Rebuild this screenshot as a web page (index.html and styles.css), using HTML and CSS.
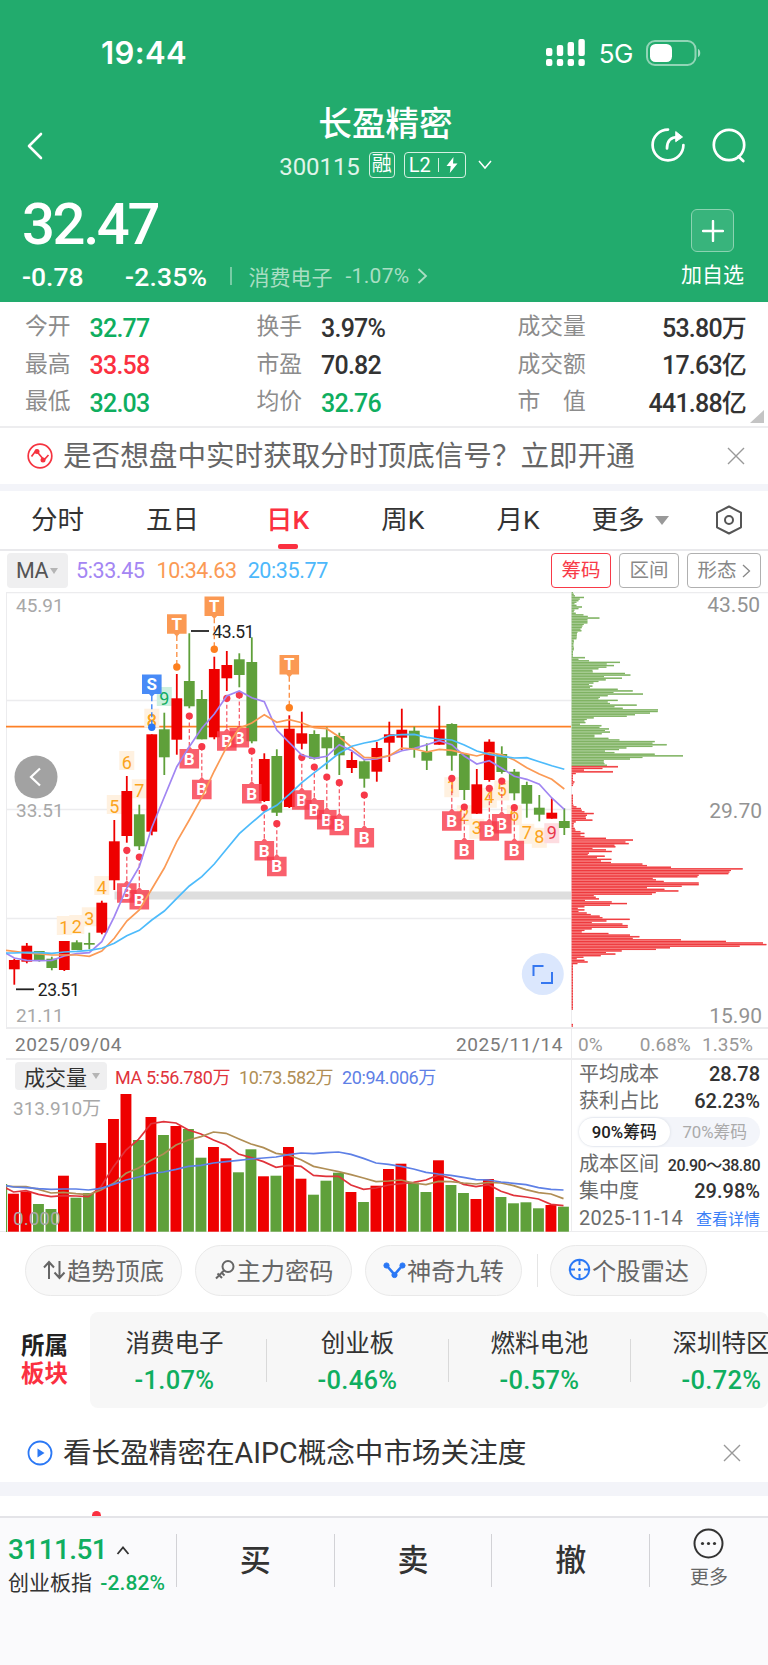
FILE: index.html
```html
<!DOCTYPE html>
<html lang="zh-CN">
<head>
  <meta charset="UTF-8">
  <title>长盈精密 300115</title>
  <meta name="viewport" content="width=device-width,initial-scale=1">
  <link rel="stylesheet" href="styles.css">
</head>
<body>
  <header class="top">
    <div class="status-bar">
      <span class="time">19:44</span>
      <div class="status-icons">
        <svg width="40" height="28" viewBox="0 0 40 28" fill="#fff">
          <rect x="0" y="9" width="6.4" height="8" rx="2"/><rect x="10.8" y="6" width="6.4" height="11" rx="2"/><rect x="21.6" y="3" width="6.4" height="14" rx="2"/><rect x="32.4" y="0" width="6.4" height="17" rx="2"/>
          <rect x="0" y="20" width="6.4" height="7" rx="2"/><rect x="10.8" y="20" width="6.4" height="7" rx="2"/><rect x="21.6" y="20" width="6.4" height="7" rx="2"/><rect x="32.4" y="20" width="6.4" height="7" rx="2"/>
        </svg>
        <span class="net">5G</span>
        <svg width="56" height="26" viewBox="0 0 56 26">
          <rect x="1" y="1" width="48.5" height="24" rx="8" fill="none" stroke="#fff" stroke-opacity=".5" stroke-width="2"/>
          <rect x="4" y="4" width="22" height="18" rx="5.5" fill="#fff"/>
          <path d="M52 9c3 1 3 7 0 8z" fill="#fff" fill-opacity=".6"/>
        </svg>
      </div>
    </div>
    <div class="nav">
      <svg class="back" width="16" height="28" viewBox="0 0 16 28"><path d="M14 2L2 14l12 12" fill="none" stroke="#fff" stroke-width="2.6" stroke-linecap="round" stroke-linejoin="round"/></svg>
      <div class="nav-title">
        <h1>长盈精密</h1>
        <div class="code-row">
          <span class="code">300115</span>
          <span class="tag">融</span>
          <span class="tag tag-l2">L2<i></i><svg width="12" height="16" viewBox="0 0 12 16"><path d="M7.5 0L0.5 9h4.2L3.8 16 11.5 6.4H7z" fill="#fff"/></svg></span>
          <svg class="down" width="14" height="10" viewBox="0 0 14 10"><path d="M1 1l6 7 6-7" fill="none" stroke="#fff" stroke-width="1.5"/></svg>
        </div>
      </div>
      <div class="nav-icons">
        <svg width="36" height="36" viewBox="0 0 36 36" fill="none" stroke="#fff" stroke-width="2.7" stroke-linecap="round" stroke-linejoin="round">
          <path d="M18 2.6A15.4 15.4 0 1 0 33.4 18"/>
          <path d="M17 21.5c0-7 3.5-11.5 11-11.5"/>
          <path d="M26 4.8l6.5 5.2-6.5 4.5z" fill="#fff" stroke-width="1"/>
        </svg>
        <svg width="36" height="36" viewBox="0 0 36 36" fill="none" stroke="#fff" stroke-width="2.7" stroke-linecap="round">
          <circle cx="18" cy="18" r="15.2"/><path d="M27.5 29.5l4.8 4.5"/>
        </svg>
      </div>
    </div>
    <div class="quote">
      <div>
        <div class="price">32.47</div>
        <div class="change-row">
          <span class="chg">-0.78</span><span class="pct">-2.35%</span><i class="bar"></i>
          <span class="industry">消费电子</span><span class="industry-pct">-1.07%</span>
          <svg width="11" height="16" viewBox="0 0 11 16"><path d="M1.5 1l7.5 7-7.5 7" fill="none" stroke="#a9dec3" stroke-width="1.8"/></svg>
        </div>
      </div>
      <div class="add">
        <span class="add-btn"><svg width="22" height="22" viewBox="0 0 22 22"><path d="M11 1v20M1 11h20" stroke="#fff" stroke-width="2.4" stroke-linecap="round"/></svg></span>
        <span>加自选</span>
      </div>
    </div>
  </header>

  <section class="stats">
    <dl><dt>今开</dt><dd class="green">32.77</dd></dl>
    <dl><dt>换手</dt><dd>3.97%</dd></dl>
    <dl class="wide"><dt>成交量</dt><dd>53.80万</dd></dl>
    <dl><dt>最高</dt><dd class="red">33.58</dd></dl>
    <dl><dt>市盈</dt><dd>70.82</dd></dl>
    <dl class="wide"><dt>成交额</dt><dd>17.63亿</dd></dl>
    <dl><dt>最低</dt><dd class="green">32.03</dd></dl>
    <dl><dt>均价</dt><dd class="green">32.76</dd></dl>
    <dl class="wide"><dt>市　值</dt><dd>441.88亿</dd></dl>
    <svg class="corner" width="14" height="13" viewBox="0 0 14 13"><path d="M14 0v13H0z" fill="#c4c4c4"/></svg>
  </section>

  <div class="notice">
    <svg width="26" height="26" viewBox="0 0 26 26"><circle cx="13" cy="13" r="11.8" fill="none" stroke="#f5333f" stroke-width="1.7"/><path d="M4.5 13.5l4.5-6 8 9.5 4.5-5" fill="none" stroke="#f5333f" stroke-width="1.7"/><circle cx="10" cy="8.5" r="2.5" fill="#f5333f"/><circle cx="16" cy="17" r="2.5" fill="#f5333f"/></svg>
    <span>是否想盘中实时获取分时顶底信号？立即开通</span>
    <svg class="close" width="18" height="18" viewBox="0 0 18 18"><path d="M1 1l16 16M17 1L1 17" stroke="#999" stroke-width="1.4"/></svg>
  </div>

  <nav class="tabs">
    <span>分时</span><span>五日</span><span class="active">日K</span><span>周K</span><span>月K</span>
    <span class="more">更多<i class="tri"></i></span>
    <svg width="28" height="30" viewBox="0 0 28 30" fill="none" stroke="#555" stroke-width="2" stroke-linejoin="round"><path d="M14 1.5l12 6.2v14.6l-12 6.2-12-6.2V7.7z"/><circle cx="14" cy="15" r="4"/></svg>
  </nav>

  <div class="ma-row">
    <span class="select">MA<i class="tri small"></i></span>
    <span class="ma5">5:33.45</span><span class="ma10">10:34.63</span><span class="ma20">20:35.77</span>
    <div class="modes">
      <span class="mode on">筹码</span><span class="mode">区间</span>
      <span class="mode last">形态<svg width="9" height="14" viewBox="0 0 9 14"><path d="M1 1l6.5 6L1 13" fill="none" stroke="#888" stroke-width="1.3"/></svg></span>
    </div>
  </div>

  <section class="chart">
    <div class="chart-left">
      <svg id="kline" width="565" height="435" viewBox="6 592 565 435"></svg>
      <div class="dates"><span>2025/09/04</span><span>2025/11/14</span></div>
      <div class="volume">
        <div class="vol-head">
          <span class="select">成交量<i class="tri small"></i></span>
          <span class="v5">MA 5:56.780万</span><span class="v10">10:73.582万</span><span class="v20">20:94.006万</span>
        </div>
        <svg id="volume" width="565" height="140" viewBox="6 1092 565 140"></svg>
      </div>
    </div>
    <div class="chart-right">
      <svg id="chips" width="197" height="435" viewBox="571 592 197 435"></svg>
      <div class="scale"><span>0%</span><span>0.68%</span><span>1.35%</span></div>
      <div class="cost">
        <p><span>平均成本</span><b>28.78</b></p>
        <p><span>获利占比</span><b>62.23%</b></p>
        <div class="toggle"><span class="on">90%筹码</span><span>70%筹码</span></div>
        <p><span>成本区间</span><b class="range">20.90～38.80</b></p>
        <p><span>集中度</span><b>29.98%</b></p>
        <p><span class="day">2025-11-14</span><a>查看详情</a></p>
      </div>
    </div>
  </section>

  <div class="tools">
    <span class="tool"><svg width="23" height="22" viewBox="0 0 23 22" fill="none" stroke="#666" stroke-width="2"><path d="M6 20V3M1 8.5L6 3l5 5.5M16.5 2v17M11.5 13.5l5 5.5 5-5.5"/></svg>趋势顶底</span>
    <span class="tool"><svg width="22" height="22" viewBox="0 0 22 22" fill="none" stroke="#666" stroke-width="2"><circle cx="14" cy="7.5" r="5.5"/><path d="M10 11.5L2 19.5M3.5 14.5l4.5 4.5M7 13l3.5 3.5"/></svg>主力密码</span>
    <span class="tool"><svg width="23" height="18" viewBox="0 0 23 18" fill="#2b78f5" stroke="#2b78f5"><path d="M4 5l7.5 8.5L19 5" fill="none" stroke-width="2.6"/><circle cx="3.5" cy="4.5" r="2.6"/><circle cx="11.5" cy="14" r="2.6"/><circle cx="19.5" cy="4.5" r="2.6"/></svg>神奇九转</span>
    <i class="split"></i>
    <span class="tool"><svg width="23" height="23" viewBox="0 0 23 23" fill="none" stroke="#2b78f5" stroke-width="2"><circle cx="11.5" cy="11.5" r="9.7"/><path d="M11.5 2v5M11.5 16v5M2 11.5h5M16 11.5h5"/><circle cx="11.5" cy="11.5" r="1.5" fill="#2b78f5" stroke="none"/></svg>个股雷达</span>
  </div>

  <section class="sectors">
    <div class="sector-label">所属<em>板块</em></div>
    <div class="sector-list">
      <div class="sector"><span>消费电子</span><b>-1.07%</b></div>
      <div class="sector"><span>创业板</span><b>-0.46%</b></div>
      <div class="sector"><span>燃料电池</span><b>-0.57%</b></div>
      <div class="sector"><span>深圳特区</span><b>-0.72%</b></div>
    </div>
  </section>

  <div class="notice promo">
    <svg width="26" height="26" viewBox="0 0 26 26"><circle cx="13" cy="13" r="11.5" fill="none" stroke="#2b78f5" stroke-width="1.8"/><path d="M10.5 8.5l7 4.5-7 4.5z" fill="#2b78f5"/></svg>
    <span>看长盈精密在AIPC概念中市场关注度</span>
    <svg class="close" width="18" height="18" viewBox="0 0 18 18"><path d="M1 1l16 16M17 1L1 17" stroke="#999" stroke-width="1.4"/></svg>
  </div>
  <div class="peek"><i></i></div>

  <footer class="trade">
    <div class="index">
      <div class="index-value">3111.51<svg width="14" height="9" viewBox="0 0 14 9"><path d="M1.5 8L7 1.5 12.5 8" fill="none" stroke="#333" stroke-width="1.8"/></svg></div>
      <div class="index-name">创业板指 <b>-2.82%</b></div>
    </div>
    <span class="act">买</span>
    <span class="act">卖</span>
    <span class="act">撤</span>
    <div class="act-more">
      <svg width="31" height="31" viewBox="0 0 31 31"><circle cx="15.5" cy="15.5" r="14" fill="none" stroke="#333" stroke-width="2"/><g fill="#333"><circle cx="9.5" cy="15.5" r="1.6"/><circle cx="15.5" cy="15.5" r="1.6"/><circle cx="21.5" cy="15.5" r="1.6"/></g></svg>
      <span>更多</span>
    </div>
  </footer>

  <script>
    const RED = "#ee0000", GREEN = "#5fa03a", STEP = 12.5, X0 = 14.3;
    const cx = i => X0 + i * STEP;

    // [up, high, body top, body bottom, low, volume top]
    const candles = [
      [1,958.7,960,969.3,984.7,1193.7],[1,943,945.7,961.7,963.3,1191.7],[0,951,951,960,961.7,1204],
      [0,956.7,958.7,968,970.3,1209],[1,941,941,970,971,1175.7],[0,940.3,942.3,950,950,1197.7],
      [0,932.7,943,944.7,949.3,1193],[1,900.7,902.7,932.7,934.3,1143],[1,820,841.3,880.3,890,1119],
      [1,776,791,836,842.7,1094],[0,804.7,814.3,846.3,850,1140],[1,734.3,734.3,831.7,835.3,1117],
      [0,712.7,729.3,757.3,775,1135],[1,674,698.3,739.7,754.7,1126],[0,633.3,681,706.3,708.3,1129],
      [0,690,699,739.3,739.3,1157.7],[1,656.7,669,737.3,739.3,1147],[1,651,665,678.3,691,1158.3],
      [0,653.3,659.3,675,687.3,1172.3],[0,637.3,662,741.3,743.3,1149.3],[1,753.3,759,801,802,1176.3],
      [0,749.3,756,812.7,816,1175.7],[1,715.3,728.7,807,808,1147],[1,711.7,733.3,743.7,749.3,1178.7],
      [0,730.3,734,758.7,759.7,1194.7],[0,727.3,737.3,748.3,769.3,1180.7],[0,732.7,736,755.3,775,1172.7],
      [1,751.7,760,768,773,1192],[0,760.3,761.3,778.7,787.7,1202],[1,742,748,771.7,781.7,1185.7],
      [1,721.7,734.3,742.7,762,1169],[1,708.7,729.7,737.7,750.3,1163.7],[0,726.7,730.7,748.7,757.7,1182.7],
      [0,743.3,752,760.7,770,1192],[1,705.7,729.3,744.7,744.7,1160.3],[0,723.3,724,755.7,770.7,1185],
      [0,753.3,754,790,800,1193],[1,769,784.3,813.7,814,1199],[1,739.3,741.7,780,781.7,1179],
      [0,746.3,754,772,773.7,1197],[0,769,771.7,793.3,800.3,1203.3],[0,781.7,785,803.7,817.7,1202.3],
      [0,795,807.7,814.7,821.3,1208.3],[1,798.3,812.7,818.7,818.7,1205],[0,808.3,821,828,835,1206.7]
    ];
    // first value is the left edge of the plot
    const ma5 = [953.3,958,960.3,960.7,960.3,956,953.7,952.7,941.7,916.7,888,866.7,827.5,797,766.7,746.7,728.3,714,696,691,697.7,701.7,730,742.7,755,758.3,756.3,744.7,750.7,759.7,759,755.7,750.7,748.3,744.7,740.7,744.7,756,764,760.7,768.3,776.3,779.3,784.3,798,809.3];
    const ma10 = [950.3,951.3,953,954,955,955,955,956.3,951,938.3,921,910,889,868,841.7,820,797.3,771,746.7,728.3,723,714.7,722.3,719.7,722.7,727.7,728.7,737,747.3,757.3,758,755.7,748,749,752,749.3,750.3,753.3,756,752.7,754.7,760,767.7,774,779.3,789];
    const ma20 = [953,953,952.3,952.7,953.3,952,951.3,950.3,948.3,943.3,935.7,930.3,920,911,898.3,886,876.7,864,848.7,833.7,822.7,812,805.3,794.3,782.7,772.7,763,753,746.3,743,740.7,735.5,734.7,734.3,737.3,739,740,745,751,754.3,756.3,758,757.7,761.7,765.7,769.3];
    const v5 = [414,426,422,433,440,437,438,440,410,350,300,268,221,215,219,240,252,270,285,312,323,335,352,346,349,376,379,379,405,418,414,405,401,397,390,375,385,403,410,404,424,436,441,447,463,467];
    const v10 = [408,410,410,418,429,427,431,434,420,400,370,354,331,312,285,270,260,246,250,266,282,293,310,315,329,349,357,365,374,384,395,393,390,399,404,394,395,399,402,397,399,407,419,428,432,446];
    const v20 = [407,411,413,416,418,417,417,420,415,403,390,381,371,366,358,349,346,339,335,331,327,324,321,314,309,311,308,306,313,325,339,343,349,357,367,372,376,382,389,390,396,400,404,413,418,420];

    // candle index -> y of the signal dot
    const buys = [[9,850.3],[10,857],[14,716],[15,746.7],[18,695],[17,698.3],[19,751],[20,808],[21,823.7],[23,757.3],[24,767],[25,777],[26,782.7],[28,795],[35,778.3],[36,807],[39,781],[38,788.3],[40,807.7]];
    const sells = [[11,727.3,"S","#3e85f7","#2b78f5"],[13,667,"T","#fb934a","#fd7f1e"],[16,649.3,"T","#fb934a","#fd7f1e"],[22,707.7,"T","#fb934a","#fd7f1e"]];
    const counts = [[4,"1",934],[5,"2",933],[6,"3",925.3],[7,"4",894],[8,"5",813],[9,"6",769],[10,"7",797.3],[11,"8",726.7],[12,"9",705,"g"],
      [35,"1",792.7],[36,"2",820.7],[37,"3",834.3],[38,"4",803.3],[39,"5",796],[40,"6",820.7],[41,"7",839.3],[42,"8",843.3],[43,"9",838.7,"r"]];

    const rect = (x,y,w,h,f,extra="") => `<rect x="${x}" y="${y}" width="${w}" height="${h}" fill="${f}" ${extra}/>`;
    const line = (x1,y1,x2,y2,c,w=1,extra="") => `<line x1="${x1}" y1="${y1}" x2="${x2}" y2="${y2}" stroke="${c}" stroke-width="${w}" ${extra}/>`;
    const text = (x,y,cls,s) => `<text x="${x}" y="${y}" class="${cls}">${s}</text>`;
    const curve = (ys,c,dx=0) => `<polyline fill="none" stroke="${c}" stroke-width="1.7" points="${ys.map((y,i)=>(i ? cx(i-1)+dx : 6)+","+y).join(" ")}"/>`;

    function drawKline() {
      let s = line(6.5,592,6.5,1027,"#ececee");
      for (const y of [592.5,700.5,809.5,918.5]) s += line(6,y,571,y,"#ececee",1.3);
      s += rect(114.5,891.5,457,8,"#dedede");
      s += text(16,611.7,"axis","45.91") + text(16,817,"axis","33.51") + text(16,1022.3,"axis","21.11");
      s += line(6,726.7,571,726.7,"#fd8026",1.8);
      for (const [i,n,y,k] of counts) {
        const bg = k==="g" ? "#cdf0df" : k==="r" ? "#fddce0" : "#fff1e0";
        s += rect(cx(i)-7.5, y-(i<30?18:15.5), 15, i<30?19:20, bg);
        if (i !== 43) s += text(cx(i),y,"count "+(k||""),n);
      }
      candles.forEach(([up,hi,top,bot,lo],i) => {
        const c = up ? RED : GREEN;
        s += line(cx(i),hi,cx(i),lo,c,1.8) + rect(cx(i)-5.4,top,10.8,bot-top,c);
      });
      s += text(cx(43),838.7,"count r","9") + text(cx(11),726.7,"count","8");
      s += line(191,631,209,631,"#222",1.8) + text(212.5,637.7,"peak","43.51");
      s += line(16,989.3,34,989.3,"#222",1.8) + text(37.8,996,"peak","23.51");
      for (const [i,y] of buys) {
        const x = cx(i);
        s += line(x,y,x,y+32,"#f5515f",1.2,'stroke-dasharray="4 2.5"');
        s += `<path d="M${x-9.8} ${y+33}h7l2.8-3 2.8 3h7v19.5h-19.6z" fill="#f73848" fill-opacity=".8"/>`;
        s += `<circle cx="${x}" cy="${y}" r="3.6" fill="#f73848"/>` + text(x,y+48.7,"sig","B");
      }
      for (const [i,y,t,c,d] of sells) {
        const x = cx(i);
        s += line(x,y-31,x,y,c,1.4,'stroke-dasharray="5 3"');
        s += `<path d="M${x-9.8} ${y-52.8}h19.6v19.5h-7l-2.8 3-2.8-3h-7z" fill="${c}" fill-opacity=".95"/>`;
        s += `<circle cx="${x}" cy="${y}" r="3.7" fill="${d}"/>` + text(x,y-37.3,"sig",t);
      }
      s += curve(ma5,"#a186f2") + curve(ma10,"#fb9a55") + curve(ma20,"#4dbbfb");
      s += `<circle cx="36" cy="777" r="21.5" fill="#a2a2a2"/><path d="M40 768.5l-9 8.5 9 8.5" fill="none" stroke="#fff" stroke-width="2.2"/>`;
      s += `<circle cx="542.8" cy="974" r="21" fill="#dbe7fd"/><path d="M533.5 976v-10h10M541 983h11v-11" fill="none" stroke="#3577f0" stroke-width="2"/>`;
      document.getElementById("kline").innerHTML = s;
    }

    function drawVolume() {
      let s = rect(6,1184,1.2,48,GREEN);
      candles.forEach((c,i) => { s += rect(cx(i)-6.3,c[5],10.9,1231.7-c[5],c[0] ? RED : GREEN); });
      s += text(13,1115,"axis","313.910万") + text(13,1225,"axis","0.000");
      const y = a => a.map(v => 1050+v/3);
      s += curve(y(v5),"#e0333b",-.8) + curve(y(v10),"#b08e55",-.8) + curve(y(v20),"#5e80e6",-.8);
      document.getElementById("volume").innerHTML = s;
    }

    // cost distribution, each run is spread evenly between two y values
    const runs = [
      ["g",592.7,765.3,[4,6,10,37,24,20,14,8,14,31,20,8,6,12,35,48,83,47,47,47,36,32,30,26,29,17,16,15,15,14,6,7,5,5,5,7,6,4,4,4,4,40,20,52,145,105,127,104,80,62,63,160,176,97,151,102,80,65,52,62,55,138,183,125,214,108,85,80,138,108,115,195,128,153,259,258,235,190,165,66,45,38,41,25,89,83,112,100,115,90,68,68,110,143,249,242,285,242,164,142,100,128,249,334,212,175,96,96,98,106]],
      ["r",766.7,785.3,[139,92,37,124,12,4,4,4,4,8,5,4]],
      ["r",795.3,840,[4,4,4,4,4,4,5,14,28,30,38,66,46,42,43,62,12,6,5,5,9,11,26,38,26,38,103,184]],
      ["r",842,963.5,[161,171,128,131,62,103,120,52,48,99,76,119,88,118,212,226,298,513,478,473,470,381,377,243,253,276,381,381,330,226,278,320,252,241,66,72,82,40,120,166,115,38,18,38,20,45,57,84,92,174,104,60,152,168,168,60,38,30,110,175,203,183,328,463,574,584,504,295,253,150,103,131,87,35,15,38,48,17]],
      ["r",965,1009,Array(29).fill(4)],
      ["r",1024.5,1026,[4,4]]
    ];
    function drawChips() {
      let s = line(571,592.5,768,592.5,"#ececee",1.3) + line(571.5,592,571.5,1027,"#ececee");
      for (const [k,from,to,vals] of runs) {
        const step = (to-from)/(vals.length-1);
        vals.forEach((v,i) => {
          const y = from+i*step;
          s += rect(571.7,(y-step/2).toFixed(2),(v/3).toFixed(1),step.toFixed(2),k==="g" ? "#a9cd95" : "#f98080");
          s += rect(571.7,(y-.5).toFixed(2),(v/3).toFixed(1),1.1,k==="g" ? "#7fb262" : "#ee3a3e");
        });
      }
      s += text(760,612.3,"price-axis","43.50") + text(762,818,"price-axis","29.70") + text(762,1023,"price-axis","15.90");
      document.getElementById("chips").innerHTML = s;
    }
    drawKline();
    drawVolume();
    drawChips();
  </script>
</body>
</html>
```

FILE: styles.css
```css
* { box-sizing: border-box; }
body {
  margin: 0;
  width: 768px;
  height: 1665px;
  overflow: hidden;
  background: #fff;
  color: #333;
  font-family: Roboto, "Noto Sans CJK SC", sans-serif;
  display: flex;
  flex-direction: column;
}
svg { display: block; flex: none; }
i, em { font-style: normal; }
h1, p, dl, dd { margin: 0; }
b { font-weight: 500; }
.green { color: #0fae5f; }
.red { color: #fb3040; }

/* header */
.top {
  height: 302px;
  background: #22ab6d;
  color: #fff;
}
.status-bar {
  height: 104px;
  padding: 1px 66px 0 101px;
  display: flex;
  justify-content: space-between;
  align-items: center;
}
.time {
  font: 600 31px/40px Inter, sans-serif;
  letter-spacing: 0.4px;
}
.status-icons {
  display: flex;
  align-items: center;
}
.net {
  margin: 2px 13px 0 13px;
  font: 400 26px/30px Inter, sans-serif;
  letter-spacing: -0.5px;
}
.nav {
  height: 86px;
  padding: 0 21px 0 27px;
  display: flex;
  justify-content: space-between;
}
.back { margin-top: 28px; }
.nav-title {
  margin-left: 78px;
  display: flex;
  flex-direction: column;
  align-items: center;
}
.nav-title h1 {
  font-size: 33.6px;
  line-height: 42px;
  font-weight: 500;
}
.code-row {
  display: flex;
  align-items: center;
  height: 38px;
}
.code {
  font-size: 24px;
  line-height: 28px;
  color: #e0f4ea;
  letter-spacing: -0.1px;
  margin: 3px 9px 0 0;
}
.tag {
  height: 26px;
  border: 1.5px solid #d5f0e2;
  border-radius: 4px;
  font-size: 20px;
  line-height: 23px;
  padding: 0 2px;
  margin-right: 9px;
}
.tag-l2 {
  width: 62px;
  padding: 0 7px 0 4px;
  display: flex;
  align-items: center;
  justify-content: space-between;
  margin-right: 12px;
}
.tag-l2 i { width: 1px; height: 14px; background: #d5f0e2; }
.nav-icons {
  display: flex;
  gap: 25px;
  padding-top: 23px;
}
.quote {
  display: flex;
  justify-content: space-between;
  padding: 0 24px 0 22px;
}
.price {
  font-size: 58px;
  line-height: 68px;
  font-weight: 500;
  letter-spacing: -2.4px;
}
.change-row {
  display: flex;
  align-items: center;
  height: 36px;
  font-size: 26.5px;
  font-weight: 500;
}
.chg { width: 103px; }
.pct { width: 83px; letter-spacing: 0.2px; }
.bar { width: 1.5px; height: 18px; margin: 0 17px 0 22px; background: #78cca5; }
.industry, .industry-pct {
  font-size: 21px;
  font-weight: 400;
  color: #a9dec3;
}
.industry-pct { margin: 0 8px 0 13px; letter-spacing: 0.3px; }
.add {
  padding-top: 19px;
  display: flex;
  flex-direction: column;
  align-items: center;
  font-size: 21px;
  line-height: 30px;
}
.add-btn {
  width: 43px;
  height: 43px;
  margin: 0 0 8px;
  border: 1.5px solid #8bd3b1;
  border-radius: 6px;
  background: #38b47c;
  display: flex;
  align-items: center;
  justify-content: center;
}

/* quote numbers */
.stats {
  position: relative;
  height: 126px;
  padding: 8px 22px 0 25px;
  display: grid;
  grid-template-columns: 231.5px 261px 1fr;
  grid-auto-rows: 37.5px;
  border-bottom: 2px solid #ededef;
}
.stats dl {
  display: flex;
  align-items: center;
}
.stats dt {
  font-size: 22.8px;
  line-height: 34px;
  color: #8c8c8c;
  margin-right: 19px;
  padding-bottom: 3px;
}
.stats dd {
  font-size: 25px;
  line-height: 34px;
  font-weight: 500;
  letter-spacing: -0.8px;
}
.stats .wide { justify-content: space-between; }
.corner { position: absolute; right: 4px; bottom: 3px; }

.notice {
  height: 63px;
  padding: 0 23px 0 27px;
  display: flex;
  align-items: center;
  font-size: 28.6px;
  line-height: 40px;
  color: #666;
  border-bottom: 7px solid #f3f4f9;
}
.notice span { margin-left: 10px; }
.notice .close { margin-left: auto; }

.tabs {
  height: 60px;
  padding: 0 25px 0 31px;
  display: flex;
  align-items: center;
  border-bottom: 2px solid #e9e9ec;
  font-size: 26.5px;
  color: #333;
}
.tabs span {
  position: relative;
  line-height: 58px;
  margin-right: 62px;
}
.tabs span:nth-child(2) { margin-right: 67px; }
.tabs span:nth-child(3), .tabs span:nth-child(4) { margin-right: 72px; }
.tabs span:nth-child(5) { margin-right: 52px; }
.tabs .active { color: #fb3040; font-weight: 500; }
.tabs .active::after {
  content: "";
  position: absolute;
  left: 50%;
  bottom: 0;
  width: 20px;
  height: 5px;
  margin-left: -10px;
  border-radius: 2px;
  background: #fb3040;
}
.tabs .more {
  display: flex;
  align-items: center;
  margin-right: auto;
}
.tri {
  margin-left: 10px;
  border: 7px solid transparent;
  border-top: 9px solid #999;
  border-bottom: 0;
}
.tri.small {
  margin-left: 2px;
  border-width: 6px 4.5px 0;
  border-top-color: #b5b5b5;
}

.ma-row {
  height: 41px;
  padding: 2px 7px 4px;
  display: flex;
  align-items: center;
  font-size: 21.5px;
  letter-spacing: -0.4px;
}
.select {
  display: flex;
  align-items: center;
  background: #efeff0;
  border-radius: 4px;
  color: #555;
}
.ma-row .select {
  width: 61px;
  height: 35px;
  padding-left: 9px;
  margin-right: 8px;
}
.ma5 { color: #a486f3; }
.ma10 { color: #fb9a55; margin: 0 11px 0 12px; }
.ma20 { color: #4db8fb; }
.modes {
  display: flex;
  gap: 8px;
  margin-left: auto;
}
.mode {
  width: 60px;
  height: 35px;
  line-height: 33px;
  border: 1.5px solid #b0b0b0;
  border-radius: 4px;
  color: #888;
  font-size: 19.5px;
  letter-spacing: 0;
  text-align: center;
}
.mode.on { color: #f83a48; border-color: #f83a48; }
.mode.last {
  width: 74px;
  display: flex;
  align-items: center;
  justify-content: center;
  gap: 5px;
}

/* charts */
.chart { display: flex; height: 640px; border-bottom: 1.5px solid #ececee; }
.chart-left {
  width: 571px;
  padding-left: 6px;
}
.chart-right { width: 197px; }
.dates, .scale {
  height: 33px;
  border-top: 2px solid #ececee;
  border-bottom: 2px solid #ececee;
  display: flex;
  align-items: center;
  justify-content: space-between;
  font-size: 19px;
  color: #7b7b7b;
}
.dates { padding: 1px 8px 0 9px; letter-spacing: 0.6px; }
.scale {
  padding: 1px 15px 0 6px;
  color: #999;
  border-left: 1.5px solid #ececee;
}
.scale span:first-child { margin-right: 26px; }
.vol-head {
  height: 32px;
  padding-left: 9px;
  display: flex;
  align-items: center;
  font-size: 18px;
  letter-spacing: -0.4px;
}
.vol-head .select {
  width: 92px;
  height: 28px;
  padding-left: 9px;
  margin-right: 8px;
  font-size: 21px;
  letter-spacing: 0;
  color: #333;
}
.vol-head .tri { margin-left: 5px; }
.v5 { color: #e0333b; }
.v10 { color: #b08e55; margin: 0 9px; }
.v20 { color: #5e80e6; }
.axis { font-size: 19px; fill: #a8a8a8; }
.price-axis { font-size: 21px; fill: #939393; text-anchor: end; }
.peak { font-size: 17.5px; fill: #222; letter-spacing: -0.5px; }
.count { font-size: 18px; fill: #fba41c; text-anchor: middle; }
.count.g { fill: #12ad62; }
.count.r { fill: #e8384a; }
.sig { font-size: 17px; font-weight: 700; fill: #fff; text-anchor: middle; }

.cost {
  height: 172px;
  padding: 0 8px 0 7px;
  border-left: 1.5px solid #ececee;
  font-size: 20px;
  color: #6b6b6b;
}
.cost p {
  height: 27px;
  display: flex;
  align-items: center;
  justify-content: space-between;
  white-space: nowrap;
}
.cost p span { margin-top: -2px; }
.cost b { color: #333; font-size: 20px; }
.cost .range { font-size: 16px; letter-spacing: -0.5px; }
.cost .day { font-size: 20px; letter-spacing: 0.3px; margin-top: 0; }
.cost a { color: #3b80f7; font-size: 16px; }
.toggle {
  height: 30px;
  margin: 3px 0;
  border-radius: 15px;
  background: #f3f5fa;
  display: flex;
  align-items: center;
  font-size: 16.8px;
  color: #aaa;
}
.toggle span { flex: 1; text-align: center; line-height: 28px; }
.toggle .on {
  background: #fff;
  border-radius: 14px;
  color: #222;
  font-weight: 500;
  box-shadow: 0 0 3px #d5dae2;
}

.tools {
  height: 80px;
  padding: 13px 0 0 25px;
  display: flex;
}
.tool {
  width: 157px;
  height: 51px;
  margin-right: 13px;
  padding-bottom: 2px;
  border: 1.5px solid #e9e9e9;
  border-radius: 26px;
  background: #f8f8f8;
  color: #666;
  font-size: 24.2px;
  display: flex;
  align-items: center;
  justify-content: center;
  gap: 1px;
}
.split { width: 1px; height: 33px; margin: 9px 12px 0 2px; background: #e5e5e5; }

.sectors {
  height: 96px;
  display: flex;
  align-items: center;
}
.sector-label {
  width: 90px;
  padding-left: 21px;
  font-size: 23.5px;
  line-height: 28px;
  font-weight: 700;
  color: #222;
}
.sector-label em { display: block; color: #fb3040; }
.sector-list {
  flex: 1;
  height: 96px;
  display: flex;
  overflow: hidden;
  background: #f7f7f7;
  border-radius: 8px;
}
.sector {
  position: relative;
  flex: none;
  width: 182px;
  display: flex;
  flex-direction: column;
  align-items: center;
  padding: 13px 1px 0 0;
  font-size: 24.5px;
  line-height: 37px;
}
.sector:first-child { width: 177px; padding-right: 8px; }
.sector b { color: #0fae5f; font-size: 25.5px; letter-spacing: 0.3px; }
.sector::after {
  content: "";
  position: absolute;
  right: 0;
  top: 27px;
  width: 1.5px;
  height: 43px;
  background: #d9d9d9;
}

.promo {
  height: 88px;
  padding: 16px 27px 0 27px;
  border-bottom: 14px solid #f3f4f9;
  color: #333;
}
.peek {
  height: 20px;
  overflow: hidden;
  padding: 15px 0 0 92px;
}
.peek i {
  display: block;
  width: 9px;
  height: 9px;
  border-radius: 50%;
  background: #fb3040;
}

.trade {
  flex: 1;
  border-top: 2px solid #e4e4e8;
  background: #fafafc;
  display: flex;
  align-items: flex-start;
}
.index {
  width: 176px;
  padding: 14px 0 0 8px;
  white-space: nowrap;
}
.index-value {
  display: flex;
  align-items: center;
  gap: 9px;
  font-size: 28px;
  line-height: 36px;
  font-weight: 500;
  color: #0fae5f;
  letter-spacing: -0.6px;
}
.index-name { font-size: 21px; line-height: 30px; }
.index-name b { color: #0fae5f; margin-left: 3px; letter-spacing: 0.1px; }
.act, .act-more {
  position: relative;
  width: 157.7px;
  text-align: center;
  font-size: 31px;
  font-weight: 500;
  line-height: 53px;
  margin-top: 16px;
  border-left: 1.5px solid #d2d2d6;
}
.act-more {
  width: 119px;
  height: 53px;
  display: flex;
  flex-direction: column;
  align-items: center;
  font-size: 19px;
  font-weight: 400;
  color: #666;
}
.act-more svg { margin-top: -6px; }
.act-more span { line-height: 26px; margin-top: 6px; }
```
